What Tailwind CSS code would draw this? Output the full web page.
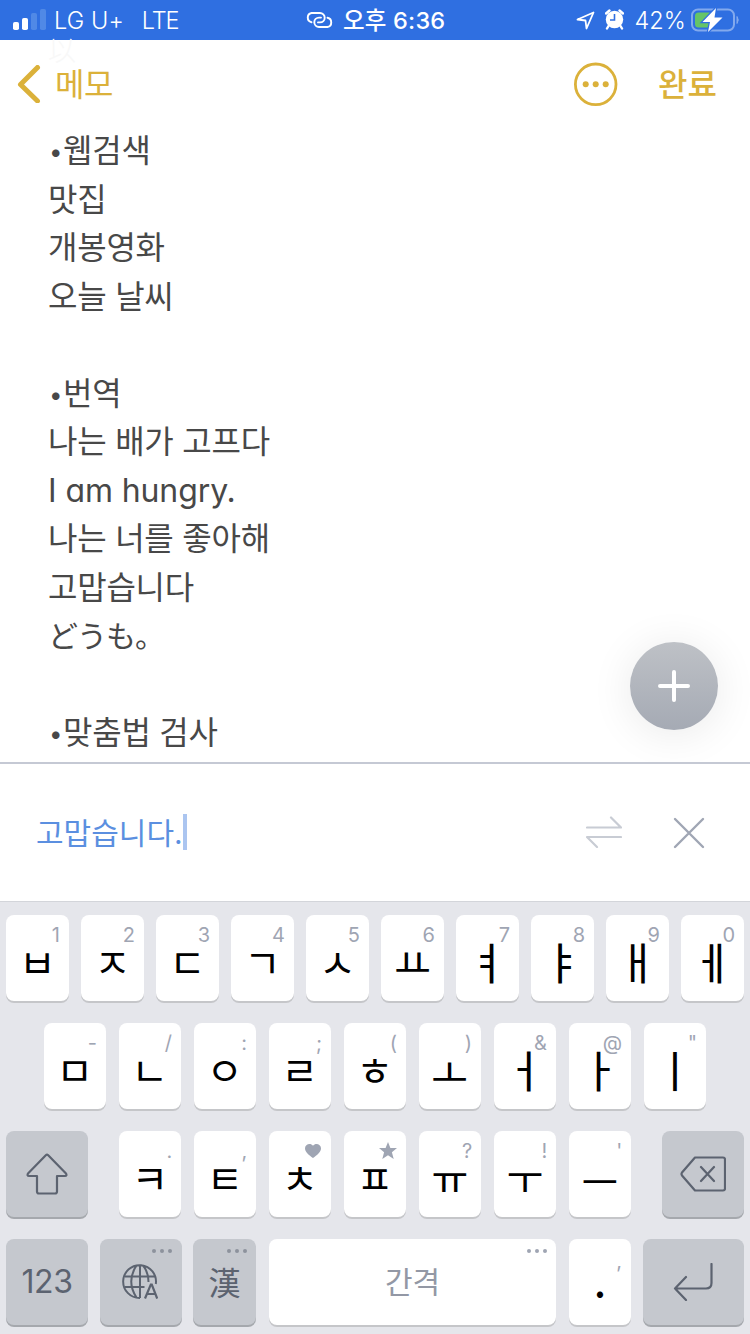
<!DOCTYPE html>
<html lang="ko">

<head>
    <meta charset="UTF-8">
    <meta name="viewport" content="width=device-width, initial-scale=1.0">
    <title>메모</title>
    <script src="https://cdn.jsdelivr.net/npm/@tailwindcss/browser@4"></script>
</head>

<body class="w-[750px] h-[1334px] overflow-hidden bg-white flex flex-col font-['Inter','Noto_Sans_CJK_KR',sans-serif]">

    <!-- Status bar -->
    <div class="relative h-10 shrink-0 bg-[#2f6fe1] text-white flex items-center justify-between pl-[13px] pr-[11px]">
        <div class="flex items-center">
            <svg class="w-[33px] h-[21px] -mt-px" viewBox="0 0 33 21" fill="#fff">
                <rect x="0" y="13" width="6" height="8" rx="1.8" />
                <rect x="9" y="9" width="6" height="12" rx="1.8" />
                <rect x="18" y="4" width="6" height="17" rx="1.8" fill="#5089e6" />
                <rect x="27" y="0" width="6" height="21" rx="1.8" fill="#5089e6" />
            </svg>
            <span class="ml-2 pt-[2px] text-[23.5px] leading-[38px] tracking-[0.1px] font-light">LG U+</span>
            <span class="ml-[18px] pt-[2px] text-[23.5px] leading-[38px] tracking-[-1.2px] font-light">LTE</span>
        </div>
        <div class="absolute left-[306px] top-0 h-10 flex items-center">
            <svg class="w-7 h-4" viewBox="0 0 28 16" fill="none" stroke="#fff" stroke-width="1.9" stroke-linecap="round">
                <path d="M5.500 10.200A4.700 4.700 0 0 1 5.500 1H14A4.700 4.700 0 0 1 14 10.400H12" />
                <path d="M21.500 5.800A4.700 4.700 0 0 1 21.500 15H13A4.700 4.700 0 0 1 13 5.600H15" />
            </svg>
            <span class="ml-[9px] pt-[2px] text-[23.5px] leading-[38px] font-medium tracking-[0.2px]">오후 6:36</span>
        </div>
        <div class="flex items-center">
            <svg class="w-[19px] h-[19px]" viewBox="0 0 19 19" fill="none" stroke="#fff" stroke-width="1.8" stroke-linejoin="round">
                <path d="M17.500 1.500L10.500 17.500L9.500 9.500L1.500 8.500Z" />
            </svg>
            <svg class="ml-[10px] w-[19px] h-[21px] -mt-px" viewBox="0 0 19 21">
                <circle cx="9.500" cy="10.500" r="8.700" fill="#fff" />
                <path d="M1 4.500L4.500 1.500M18 4.500L14.500 1.500M3.500 17L2 19.500M15.500 17L17 19.500" stroke="#fff" stroke-width="2.400" stroke-linecap="round" />
                <path d="M9.500 5V11H5" fill="none" stroke="#2f6fe1" stroke-width="1.600" />
            </svg>
            <span class="ml-[10px] pt-[2px] text-[23.5px] leading-[38px] font-light tracking-[0.1px]">42%</span>
            <svg class="ml-[5px] -mr-[1px] w-[49px] h-6" viewBox="0 0 49 24">
                <rect x="1" y="1.500" width="42" height="21" rx="6" fill="none" stroke="#82a9ed" stroke-width="2" />
                <path d="M46 8.500Q48.500 12 46 15.500Z" fill="#82a9ed" stroke="#82a9ed" />
                <rect x="4" y="4.500" width="17" height="15" rx="3.500" fill="#65c467" />
                <path d="M25 0L11.500 14H19L17 24L31.500 9.500H23.500Z" fill="#fff" stroke="#2f6fe1" stroke-width="2.500" paint-order="stroke" />
            </svg>
        </div>
    </div>

    <!-- Navigation -->
    <div class="relative h-[86px] shrink-0 flex items-center text-[#dbb13a]">
        <span class="absolute left-[48px] -top-[3px] text-[28px] leading-7 font-light text-[#f8f8f8]">以</span>
        <svg class="relative ml-[17px] mt-px w-6 h-[38px]" viewBox="0 0 24 38" fill="none" stroke="currentColor" stroke-width="5" stroke-linecap="round" stroke-linejoin="round">
            <path d="M20.500 2.500L3.500 19.500L20.500 36" />
        </svg>
        <span class="ml-[14px] pt-[3px] text-[32px] leading-[44px] tracking-[-0.4px]">메모</span>
        <svg class="absolute left-[574px] top-[22px] w-11 h-11" viewBox="0 0 44 44" fill="currentColor">
            <circle cx="21.700" cy="22.300" r="20.300" fill="none" stroke="currentColor" stroke-width="2.800" />
            <circle cx="11.700" cy="22.300" r="3" />
            <circle cx="21.700" cy="22.300" r="3" />
            <circle cx="31.700" cy="22.300" r="3" />
        </svg>
        <span class="ml-auto mr-[33px] pt-[4px] text-[32px] leading-[44px] font-medium">완료</span>
    </div>

    <!-- Note -->
    <div class="relative h-[636px] shrink-0 pt-px pl-12 text-[32px] leading-[48.5px] text-[#484848] tracking-[-0.25px] [&>p]:h-[48.5px]">
        <p><span class="relative -top-[2px] inline-block w-[15px] text-center text-[24px] leading-6">•</span>웹검색</p>
        <p>맛집</p>
        <p>개봉영화</p>
        <p>오늘 날씨</p>
        <p>&nbsp;</p>
        <p><span class="relative -top-[2px] inline-block w-[15px] text-center text-[24px] leading-6">•</span>번역</p>
        <p>나는 배가 고프다</p>
        <p class="[font-feature-settings:'cv11'] tracking-[-0.1px]">I am hungry.</p>
        <p>나는 너를 좋아해</p>
        <p>고맙습니다</p>
        <p class="text-[30px] tracking-[-1px]">どうも。</p>
        <p>&nbsp;</p>
        <p><span class="relative -top-[2px] inline-block w-[15px] text-center text-[24px] leading-6">•</span>맞춤법 검사</p>
        <button class="absolute right-8 bottom-8 w-[88px] h-[88px] rounded-full bg-linear-to-b from-[#bec1c6] to-[#a5aab4] shadow-[0_4px_44px_rgba(0,0,0,0.09)] flex items-center justify-center">
            <svg class="w-8 h-8" viewBox="0 0 32 32" stroke="#fff" stroke-width="4" stroke-linecap="round">
                <path d="M16 2V30M2 16H30" />
            </svg>
        </button>
    </div>

    <!-- Translation input -->
    <div class="relative h-[139px] shrink-0 bg-white border-t-2 border-[#c5c9d4] flex items-center pl-9 pr-[45px]">
        <span class="text-[30px] leading-[42px] text-[#5b8fe0]">고맙습니다.</span>
        <span class="w-1 h-9 -mt-[2px] bg-[#abc5f0]"></span>
        <svg class="ml-auto -mt-[2px] w-9 h-8" viewBox="0 0 36 32" fill="none" stroke="#c8ccd4" stroke-width="2.200" stroke-linecap="round" stroke-linejoin="round">
            <path d="M1 11.500H35L25 1.500M35 21H1L11 31" />
        </svg>
        <svg class="ml-[51px] w-8 h-8" viewBox="0 0 32 32" stroke="#a0a6b4" stroke-width="2.400" stroke-linecap="round">
            <path d="M2 2L30 30M30 2L2 30" />
        </svg>
    </div>

    <!-- Keyboard -->
    <div class="h-[433px] shrink-0 bg-[#e5e6eb] border-t border-[#d3d5da] pt-[13px] px-[6px] flex flex-col gap-[22px] text-black [&_i]:absolute [&_i]:right-[9px] [&_i]:top-[9px] [&_i]:not-italic [&_i]:text-[20px] [&_i]:leading-[22px] [&_i]:text-[#9fa5b3] [&_b]:font-normal [&_b]:font-['Noto_Sans_CJK_KR',sans-serif] [&_b]:text-[40px] [&_b]:leading-[40px]">

        <div class="flex gap-3 [&>div]:relative [&>div]:w-[63px] [&>div]:h-[86px] [&>div]:rounded-lg [&>div]:bg-white [&>div]:shadow-[0_2px_0_#c5c6c9] [&>div]:flex [&>div]:justify-center [&>div]:pt-[26px]">
            <div><i>1</i><b>ㅂ</b></div>
            <div><i>2</i><b>ㅈ</b></div>
            <div><i>3</i><b>ㄷ</b></div>
            <div><i>4</i><b>ㄱ</b></div>
            <div><i>5</i><b>ㅅ</b></div>
            <div><i>6</i><b>ㅛ</b></div>
            <div><i>7</i><b class="text-[44px]!">ㅕ</b></div>
            <div><i>8</i><b class="text-[44px]!">ㅑ</b></div>
            <div><i>9</i><b class="text-[44px]!">ㅐ</b></div>
            <div><i>0</i><b class="text-[44px]!">ㅔ</b></div>
        </div>

        <div class="flex gap-[12.5px] pl-[37.5px] [&>div]:relative [&>div]:w-[62.5px] [&>div]:h-[86px] [&>div]:rounded-lg [&>div]:bg-white [&>div]:shadow-[0_2px_0_#c5c6c9] [&>div]:flex [&>div]:justify-center [&>div]:pt-[26px]">
            <div><i>-</i><b>ㅁ</b></div>
            <div><i>/</i><b>ㄴ</b></div>
            <div><i>:</i><b>ㅇ</b></div>
            <div><i>;</i><b>ㄹ</b></div>
            <div><i>(</i><b>ㅎ</b></div>
            <div><i>)</i><b class="pt-[2px]">ㅗ</b></div>
            <div><i>&amp;</i><b class="text-[44px]!">ㅓ</b></div>
            <div><i>@</i><b class="text-[44px]!">ㅏ</b></div>
            <div><i>"</i><b class="text-[44px]!">ㅣ</b></div>
        </div>

        <div class="flex justify-between">
            <div class="w-[82px] h-[86px] rounded-lg bg-[#c5c8ce] shadow-[0_2px_0_#a5a8ad] flex items-center justify-center">
                <svg class="w-[42px] h-[42px]" viewBox="0 0 42 42" fill="none" stroke="#5c6370" stroke-width="2.200" stroke-linejoin="round">
                    <path d="M19.800 2.200Q21 1 22.200 2.200L40 20.500Q41.200 23 39 23H31V38.500Q31 40.500 29 40.500H13Q11 40.500 11 38.500V23H3Q.8 23 2 20.500Z" />
                </svg>
            </div>
            <div class="flex gap-[12.5px] [&>div]:relative [&>div]:w-[62.5px] [&>div]:h-[86px] [&>div]:rounded-lg [&>div]:bg-white [&>div]:shadow-[0_2px_0_#c5c6c9] [&>div]:flex [&>div]:justify-center [&>div]:pt-[26px]">
                <div><i>.</i><b>ㅋ</b></div>
                <div><i>,</i><b>ㅌ</b></div>
                <div>
                    <svg class="absolute right-[10px] top-[13px] w-4 h-[14px]" viewBox="0 0 16 14" fill="#9fa5b3">
                        <path d="M8 14C4 11 0 8 0 4.200C0 .3 5.500-1.500 8 1.800C10.500-1.500 16 .3 16 4.200C16 8 12 11 8 14Z" />
                    </svg>
                    <b>ㅊ</b>
                </div>
                <div>
                    <svg class="absolute right-[9px] top-[11px] w-[18px] h-[17px]" viewBox="0 0 18 17" fill="#9fa5b3">
                        <path d="M9 0L11.400 6H18L12.900 10.200L14.700 17L9 13.200L3.300 17L5.100 10.200L0 6H6.600Z" />
                    </svg>
                    <b>ㅍ</b>
                </div>
                <div><i>?</i><b>ㅠ</b></div>
                <div><i>!</i><b>ㅜ</b></div>
                <div><i>'</i><b class="pt-[3px]">ㅡ</b></div>
            </div>
            <div class="w-[82px] h-[86px] rounded-lg bg-[#c5c8ce] shadow-[0_2px_0_#a5a8ad] flex items-center justify-center">
                <svg class="w-[46px] h-9" viewBox="0 0 46 36" fill="none" stroke="#5c6370" stroke-width="2.200" stroke-linejoin="round" stroke-linecap="round">
                    <path d="M15 1.500H43Q45 1.500 45 3.500V32.500Q45 34.500 43 34.500H15L2 19.500Q1 18 2 16.500ZM21 11L34 25M34 11L21 25" />
                </svg>
            </div>
        </div>

        <div class="flex h-[86px] text-[#5c6370]">
            <div class="w-[82px] rounded-lg bg-[#c5c8ce] shadow-[0_2px_0_#a5a8ad] flex items-center justify-center text-[32px] tracking-[-0.5px]">123</div>
            <div class="relative ml-3 w-[82px] rounded-lg bg-[#c5c8ce] shadow-[0_2px_0_#a5a8ad] flex items-center justify-center">
                <svg class="absolute right-[10px] top-[10px] w-5 h-1" viewBox="0 0 20 4" fill="#8d929c">
                    <circle cx="2" cy="2" r="2" /><circle cx="10" cy="2" r="2" /><circle cx="18" cy="2" r="2" />
                </svg>
                <svg class="w-9 h-9 -ml-[2px]" viewBox="0 0 36 36" fill="none" stroke="#5c6370" stroke-width="2">
                    <path d="M18 34A16.400 16.400 0 1 1 33.800 20M18 1V34M3 12.500H33M3 23H22.500M14.500 1.500Q4 17.500 14.500 33.500M21 1.500Q26.500 8 26.500 18" />
                    <path d="M23 34.500L28.800 20.500H29.800L35.200 34.500M24.800 30H33.500" stroke-width="2.200" />
                </svg>
            </div>
            <div class="relative ml-[11px] w-[63px] rounded-lg bg-[#c5c8ce] shadow-[0_2px_0_#a5a8ad] flex items-center justify-center pb-[3px] text-[32px] font-['Noto_Sans_CJK_KR',sans-serif]">
                <svg class="absolute right-[9px] top-[10px] w-5 h-1" viewBox="0 0 20 4" fill="#8d929c">
                    <circle cx="2" cy="2" r="2" /><circle cx="10" cy="2" r="2" /><circle cx="18" cy="2" r="2" />
                </svg>
                漢
            </div>
            <div class="relative ml-[13px] w-[287px] rounded-lg bg-white shadow-[0_2px_0_#c5c6c9] flex items-center justify-center text-[30px] text-[#9398a5]">
                <svg class="absolute right-[9px] top-[10px] w-5 h-1" viewBox="0 0 20 4" fill="#9fa5b3">
                    <circle cx="2" cy="2" r="2" /><circle cx="10" cy="2" r="2" /><circle cx="18" cy="2" r="2" />
                </svg>
                간격
            </div>
            <div class="relative ml-[13px] w-[62px] rounded-lg bg-white shadow-[0_2px_0_#c5c6c9] flex justify-center pt-[22px] text-black"><i class="top-[11px]!">,</i><b class="font-medium!">.</b></div>
            <div class="ml-3 w-[101px] rounded-lg bg-[#c5c8ce] shadow-[0_2px_0_#a5a8ad] flex items-center justify-center">
                <svg class="w-10 h-[38px] -ml-[2px]" viewBox="0 0 40 38" fill="none" stroke="#5c6370" stroke-width="2.200" stroke-linecap="round" stroke-linejoin="round">
                    <path d="M38.500 1V20Q38.500 25.500 33 25.500H2M13 14L2 25.500L13 37" />
                </svg>
            </div>
        </div>
    </div>

</body>

</html>
